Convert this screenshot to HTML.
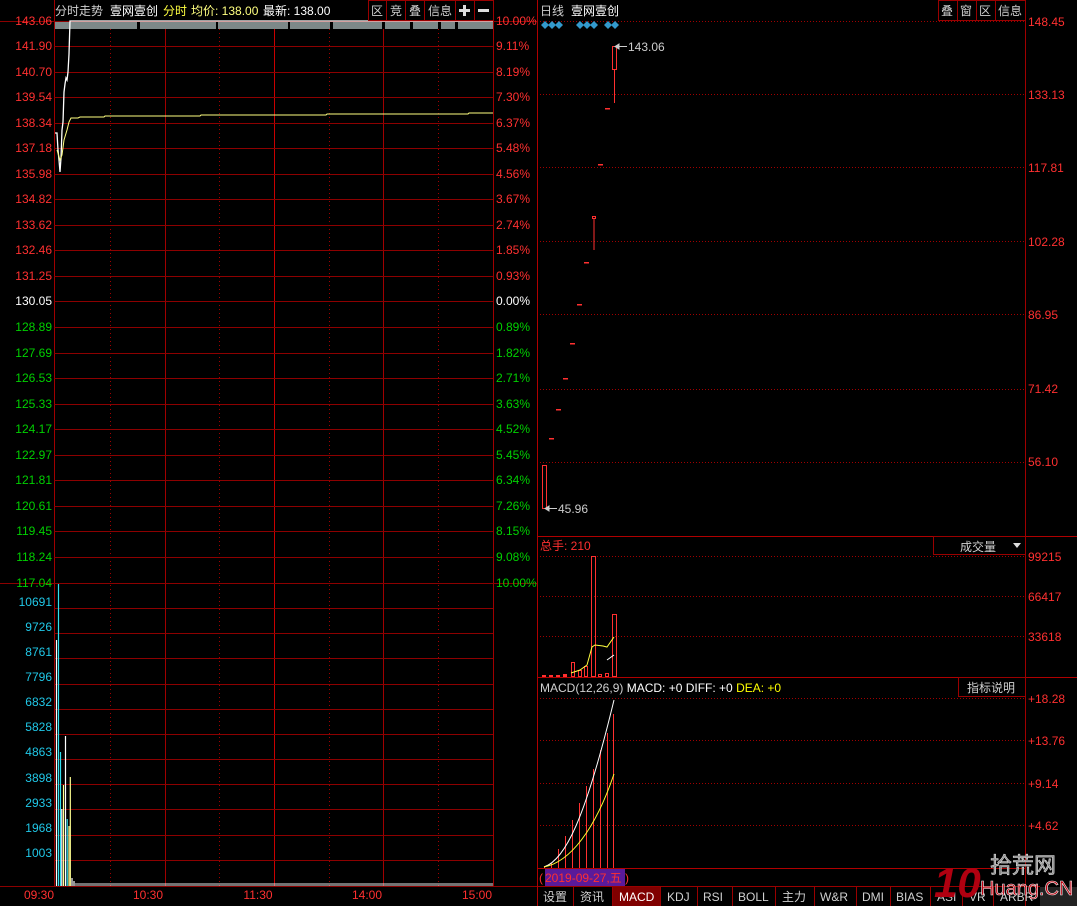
<!DOCTYPE html>
<html><head><meta charset="utf-8"><style>
html,body{margin:0;padding:0;background:#000;width:1077px;height:906px;overflow:hidden}
svg{display:block}
text{font-family:"Liberation Sans","Noto Sans CJK SC",sans-serif;font-size:12px}
.g line,.g rect{shape-rendering:crispEdges}
</style></head><body>
<svg width="1077" height="906" viewBox="0 0 1077 906" xmlns="http://www.w3.org/2000/svg">
<rect width="1077" height="906" fill="#000"/>
<g class="g">
<g stroke="#a00000" stroke-width="1">
<line x1="54.5" y1="0" x2="54.5" y2="886"/>
<line x1="493.5" y1="0" x2="493.5" y2="886"/>
<line x1="165.5" y1="21" x2="165.5" y2="886"/>
<line x1="383.5" y1="21" x2="383.5" y2="886"/>
</g>
<line x1="274.5" y1="21" x2="274.5" y2="886" stroke="#c80000" stroke-width="1"/>
<g stroke="#a00000" stroke-dasharray="1,3">
<line x1="110.5" y1="21" x2="110.5" y2="886"/>
<line x1="219.5" y1="21" x2="219.5" y2="886"/>
<line x1="329.5" y1="21" x2="329.5" y2="886"/>
<line x1="438.5" y1="21" x2="438.5" y2="886"/>
</g>
<g stroke="#8c0000">
<line x1="0" y1="21.5" x2="537" y2="21.5"/>
<line x1="54" y1="46.5" x2="493" y2="46.5"/><line x1="54" y1="72.5" x2="493" y2="72.5"/><line x1="54" y1="97.5" x2="493" y2="97.5"/><line x1="54" y1="123.5" x2="493" y2="123.5"/><line x1="54" y1="148.5" x2="493" y2="148.5"/><line x1="54" y1="174.5" x2="493" y2="174.5"/><line x1="54" y1="199.5" x2="493" y2="199.5"/><line x1="54" y1="225.5" x2="493" y2="225.5"/><line x1="54" y1="250.5" x2="493" y2="250.5"/><line x1="54" y1="276.5" x2="493" y2="276.5"/>
<line x1="54" y1="301.5" x2="493" y2="301.5"/>
<line x1="54" y1="327.5" x2="493" y2="327.5"/><line x1="54" y1="353.5" x2="493" y2="353.5"/><line x1="54" y1="378.5" x2="493" y2="378.5"/><line x1="54" y1="404.5" x2="493" y2="404.5"/><line x1="54" y1="429.5" x2="493" y2="429.5"/><line x1="54" y1="455.5" x2="493" y2="455.5"/><line x1="54" y1="480.5" x2="493" y2="480.5"/><line x1="54" y1="506.5" x2="493" y2="506.5"/><line x1="54" y1="531.5" x2="493" y2="531.5"/><line x1="54" y1="557.5" x2="493" y2="557.5"/>
<line x1="0" y1="583.5" x2="537" y2="583.5"/>
<line x1="54" y1="608.5" x2="493" y2="608.5"/><line x1="54" y1="633.5" x2="493" y2="633.5"/><line x1="54" y1="658.5" x2="493" y2="658.5"/><line x1="54" y1="684.5" x2="493" y2="684.5"/><line x1="54" y1="709.5" x2="493" y2="709.5"/><line x1="54" y1="734.5" x2="493" y2="734.5"/><line x1="54" y1="759.5" x2="493" y2="759.5"/><line x1="54" y1="784.5" x2="493" y2="784.5"/><line x1="54" y1="809.5" x2="493" y2="809.5"/><line x1="54" y1="835.5" x2="493" y2="835.5"/><line x1="54" y1="860.5" x2="493" y2="860.5"/>
<line x1="0" y1="886.5" x2="537" y2="886.5"/>
</g>
<line x1="537.5" y1="0" x2="537.5" y2="906" stroke="#b00000"/>
</g>
<!-- grey diamond band -->
<rect x="55" y="22" width="438" height="7" fill="#7d8888"/>
<g fill="#000"><rect x="137" y="22" width="3" height="7"/><rect x="216" y="22" width="2" height="7"/><rect x="288" y="22" width="2" height="7"/><rect x="330" y="22" width="3" height="7"/><rect x="382" y="22" width="3" height="7"/><rect x="410" y="22" width="3" height="7"/><rect x="438" y="22" width="3" height="7"/><rect x="455" y="22" width="3" height="7"/></g>
<!-- price lines -->
<polyline fill="none" stroke="#fff" stroke-width="1.3" points="55,133 57,133 58,150 59,160 60,172 61,158 62,130 63,122 64,92 65,84 66,78 67,80 68,72 69,54 70,21 493,21"/>
<polyline fill="none" stroke="#ffff80" stroke-width="1" points="57,150 60,160 62,155 64,140 67,130 69,122 71,118 78,118 80,117 104,117 105,116 200,116 201,115 326,115 327,114 468,114 469,113 493,113"/>
<!-- left labels -->
<g text-anchor="end" fill="#ff3030">
<text x="52" y="25">143.06</text><text x="52" y="50">141.90</text><text x="52" y="76">140.70</text><text x="52" y="101">139.54</text><text x="52" y="127">138.34</text><text x="52" y="152">137.18</text><text x="52" y="178">135.98</text><text x="52" y="203">134.82</text><text x="52" y="229">133.62</text><text x="52" y="254">132.46</text><text x="52" y="280">131.25</text>
</g>
<text x="52" y="305" text-anchor="end" fill="#fff">130.05</text>
<g text-anchor="end" fill="#00d000">
<text x="52" y="331">128.89</text><text x="52" y="357">127.69</text><text x="52" y="382">126.53</text><text x="52" y="408">125.33</text><text x="52" y="433">124.17</text><text x="52" y="459">122.97</text><text x="52" y="484">121.81</text><text x="52" y="510">120.61</text><text x="52" y="535">119.45</text><text x="52" y="561">118.24</text><text x="52" y="587">117.04</text>
</g>
<g fill="#ff3030">
<text x="496" y="25">10.00%</text><text x="496" y="50">9.11%</text><text x="496" y="76">8.19%</text><text x="496" y="101">7.30%</text><text x="496" y="127">6.37%</text><text x="496" y="152">5.48%</text><text x="496" y="178">4.56%</text><text x="496" y="203">3.67%</text><text x="496" y="229">2.74%</text><text x="496" y="254">1.85%</text><text x="496" y="280">0.93%</text>
</g>
<text x="496" y="305" fill="#fff">0.00%</text>
<g fill="#00d000">
<text x="496" y="331">0.89%</text><text x="496" y="357">1.82%</text><text x="496" y="382">2.71%</text><text x="496" y="408">3.63%</text><text x="496" y="433">4.52%</text><text x="496" y="459">5.45%</text><text x="496" y="484">6.34%</text><text x="496" y="510">7.26%</text><text x="496" y="535">8.15%</text><text x="496" y="561">9.08%</text><text x="496" y="587">10.00%</text>
</g>
<g text-anchor="end" fill="#20c8e8">
<text x="52" y="606">10691</text><text x="52" y="631">9726</text><text x="52" y="656">8761</text><text x="52" y="681">7796</text><text x="52" y="706">6832</text><text x="52" y="731">5828</text><text x="52" y="756">4863</text><text x="52" y="782">3898</text><text x="52" y="807">2933</text><text x="52" y="832">1968</text><text x="52" y="857">1003</text>
</g>
<!-- volume bars -->
<g stroke-width="1.2">
<line x1="56.5" y1="640" x2="56.5" y2="886" stroke="#fff"/>
<line x1="58.5" y1="584" x2="58.5" y2="886" stroke="#30e0f0"/>
<line x1="60.5" y1="752" x2="60.5" y2="886" stroke="#30e0f0"/>
<line x1="61.8" y1="809" x2="61.8" y2="886" stroke="#fff"/>
<line x1="63.5" y1="785" x2="63.5" y2="886" stroke="#ffff90"/>
<line x1="65.5" y1="736" x2="65.5" y2="886" stroke="#fff"/>
<line x1="67.2" y1="819" x2="67.2" y2="886" stroke="#30e0f0"/>
<line x1="69" y1="826" x2="69" y2="886" stroke="#ffff90"/>
<line x1="70.3" y1="777" x2="70.3" y2="886" stroke="#ffff90"/>
<line x1="72" y1="878" x2="72" y2="886" stroke="#fff"/>
<line x1="74" y1="881" x2="74" y2="886" stroke="#fff"/>
</g>
<rect x="75" y="883" width="418" height="3" fill="#fff" opacity="0.45"/>
<!-- time labels -->
<g fill="#ff3030" text-anchor="middle">
<text x="39" y="899">09:30</text><text x="148" y="899">10:30</text><text x="258" y="899">11:30</text><text x="367" y="899">14:00</text><text x="477" y="899">15:00</text>
</g>
<!-- left header -->
<text x="55" y="15" fill="#d0d0d0">分时走势</text>
<text x="110" y="15" fill="#fff">壹网壹创</text>
<text x="163" y="15" fill="#ffff40">分时</text>
<text x="191" y="15" fill="#ffff80">均价: 138.00</text>
<text x="263" y="15" fill="#fff">最新: 138.00</text>
<g fill="none" stroke="#9a0000">
<rect x="368.5" y="0.5" width="18" height="20"/><rect x="386.5" y="0.5" width="19" height="20"/><rect x="405.5" y="0.5" width="19" height="20"/><rect x="424.5" y="0.5" width="31" height="20"/><rect x="455.5" y="0.5" width="19" height="20"/><rect x="474.5" y="0.5" width="19" height="20"/>
</g>
<g fill="#d0d0d0"><text x="371" y="15">区</text><text x="390" y="15">竞</text><text x="409" y="15">叠</text><text x="428" y="15">信息</text></g>
<rect x="459" y="9" width="11" height="3" fill="#ddd"/><rect x="463" y="5" width="3" height="11" fill="#ddd"/>
<rect x="478" y="9" width="11" height="3" fill="#ddd"/>

<!-- RIGHT PANEL -->
<g class="g">
<line x1="1025.5" y1="0" x2="1025.5" y2="906" stroke="#a00000"/>
<g stroke="#b00000"><line x1="538" y1="536.5" x2="1077" y2="536.5"/><line x1="538" y1="677.5" x2="1077" y2="677.5"/><line x1="538" y1="868.5" x2="1025" y2="868.5"/></g>
<g stroke="#a00000" stroke-dasharray="1,2">
<line x1="540" y1="21.5" x2="1025" y2="21.5"/><line x1="540" y1="94.5" x2="1025" y2="94.5"/><line x1="540" y1="167.5" x2="1025" y2="167.5"/><line x1="540" y1="241.5" x2="1025" y2="241.5"/><line x1="540" y1="314.5" x2="1025" y2="314.5"/><line x1="540" y1="389.5" x2="1025" y2="389.5"/><line x1="540" y1="462.5" x2="1025" y2="462.5"/>
<line x1="540" y1="556.5" x2="1025" y2="556.5"/><line x1="540" y1="596.5" x2="1025" y2="596.5"/><line x1="540" y1="636.5" x2="1025" y2="636.5"/>
<line x1="540" y1="698.5" x2="1025" y2="698.5"/><line x1="540" y1="740.5" x2="1025" y2="740.5"/><line x1="540" y1="783.5" x2="1025" y2="783.5"/><line x1="540" y1="825.5" x2="1025" y2="825.5"/>
</g>
</g>
<g fill="#ff3030">
<text x="1028" y="26">148.45</text><text x="1028" y="99">133.13</text><text x="1028" y="172">117.81</text><text x="1028" y="246">102.28</text><text x="1028" y="319">86.95</text><text x="1028" y="393">71.42</text><text x="1028" y="466">56.10</text>
<text x="1028" y="561">99215</text><text x="1028" y="601">66417</text><text x="1028" y="641">33618</text>
<text x="1028" y="703">+18.28</text><text x="1028" y="745">+13.76</text><text x="1028" y="788">+9.14</text><text x="1028" y="830">+4.62</text>
</g>
<text x="540" y="15" fill="#d0d0d0">日线</text>
<text x="571" y="15" fill="#fff">壹网壹创</text>
<g fill="#3399cc">
<path d="M541 25l4-4 4 4-4 4zM548 25l4-4 4 4-4 4zM555 25l4-4 4 4-4 4z"/>
<path d="M576 25l4-4 4 4-4 4zM583 25l4-4 4 4-4 4zM590 25l4-4 4 4-4 4z"/>
<path d="M604 25l4-4 4 4-4 4zM611 25l4-4 4 4-4 4z"/>
</g>
<g fill="none" stroke="#9a0000">
<rect x="938.5" y="0.5" width="19" height="20"/><rect x="957.5" y="0.5" width="19" height="20"/><rect x="976.5" y="0.5" width="19" height="20"/><rect x="995.5" y="0.5" width="30" height="20"/>
</g>
<g fill="#d0d0d0"><text x="941" y="15">叠</text><text x="960" y="15">窗</text><text x="979" y="15">区</text><text x="998" y="15">信息</text></g>
<!-- candles -->
<g stroke="#ff3030" fill="none">
<rect x="542.5" y="465.5" width="4" height="43"/>
<rect x="592.5" y="216.5" width="3" height="2"/><line x1="594" y1="219" x2="594" y2="250"/>
<rect x="612.5" y="46.5" width="4" height="23"/><line x1="614.5" y1="70" x2="614.5" y2="103"/>
</g>
<g fill="#ff3030">
<rect x="549" y="438" width="5" height="1.5"/><rect x="556" y="409" width="5" height="1.5"/><rect x="563" y="378" width="5" height="1.5"/><rect x="570" y="343" width="5" height="1.5"/><rect x="577" y="304" width="5" height="1.5"/><rect x="584" y="262" width="5" height="1.5"/><rect x="598" y="164" width="5" height="1.5"/><rect x="605" y="108" width="5" height="1.5"/>
</g>
<g stroke="#ccc" fill="#ccc"><line x1="546" y1="508.5" x2="557" y2="508.5"/><path d="M545 508.5l4-2.5v5z"/><line x1="616" y1="46.5" x2="627" y2="46.5"/><path d="M615 46.5l4-2.5v5z"/></g>
<text x="558" y="513" fill="#ccc">45.96</text>
<text x="628" y="51" fill="#ccc">143.06</text>
<!-- volume panel -->
<text x="540" y="550" fill="#ff3030">总手: 210</text>
<rect x="933.5" y="536.5" width="92" height="18" fill="none" stroke="#9a0000"/>
<text x="960" y="551" fill="#d0d0d0">成交量</text>
<path d="M1013 543h8l-4 5z" fill="#ddd"/>
<g fill="none" stroke="#ff3030">
<rect x="571.5" y="662.5" width="3" height="14"/><rect x="578.5" y="670.5" width="3" height="6"/><rect x="584.5" y="666.5" width="3" height="10"/><rect x="591.5" y="556.5" width="4" height="120"/><rect x="598.5" y="674.5" width="3" height="2"/><rect x="605.5" y="673.5" width="3" height="3"/><rect x="612.5" y="614.5" width="4" height="62"/>
</g>
<g fill="#ff3030"><rect x="542" y="675" width="4" height="2"/><rect x="549" y="675" width="4" height="2"/><rect x="556" y="675" width="4" height="2"/><rect x="563" y="674" width="4" height="3"/></g>
<polyline fill="none" stroke="#ffff40" points="571,673 580,670 587,665 592,647 595,645 603,646 607,647 614,637"/>
<polyline fill="none" stroke="#fff" points="607,660 614,655"/>
<!-- MACD panel -->
<text x="540" y="692" fill="#d0d0d0">MACD(12,26,9) <tspan fill="#fff">MACD: +0 DIFF: +0 </tspan><tspan fill="#ffff00">DEA: +0</tspan></text>
<rect x="958.5" y="677.5" width="67" height="19" fill="none" stroke="#9a0000"/>
<text x="967" y="692" fill="#d0d0d0">指标说明</text>
<g stroke="#ff3030">
<line x1="544.5" y1="866" x2="544.5" y2="868"/><line x1="551.5" y1="863" x2="551.5" y2="868"/><line x1="558.5" y1="849" x2="558.5" y2="868"/><line x1="565.5" y1="836" x2="565.5" y2="868"/><line x1="572.5" y1="820" x2="572.5" y2="868"/><line x1="579.5" y1="803" x2="579.5" y2="868"/><line x1="586.5" y1="786" x2="586.5" y2="868"/><line x1="593.5" y1="769" x2="593.5" y2="868"/><line x1="600.5" y1="750" x2="600.5" y2="868"/><line x1="607.5" y1="733" x2="607.5" y2="868"/><line x1="613.5" y1="714" x2="613.5" y2="868"/>
</g>
<path d="M544 867C565 860 585 820 614 700" fill="none" stroke="#fff"/>
<path d="M544 867C570 862 595 830 614 774" fill="none" stroke="#ffff30"/>
<!-- date box -->
<rect x="545" y="869" width="80" height="17" fill="#5a1a9a"/>
<text x="539" y="882" fill="#ff3030">(</text>
<text x="545" y="882" fill="#ff3030">2019-09-27,五</text>
<text x="625" y="882" fill="#ff3030">)</text>
<!-- tabs -->
<line x1="538" y1="886.5" x2="1040" y2="886.5" stroke="#9a0000"/>
<rect x="612" y="887" width="48" height="19" fill="#800000"/>
<g stroke="#9a0000"><line x1="573.5" y1="887" x2="573.5" y2="906"/><line x1="612.5" y1="887" x2="612.5" y2="906"/><line x1="660.5" y1="887" x2="660.5" y2="906"/><line x1="697.5" y1="887" x2="697.5" y2="906"/><line x1="732.5" y1="887" x2="732.5" y2="906"/><line x1="775.5" y1="887" x2="775.5" y2="906"/><line x1="814.5" y1="887" x2="814.5" y2="906"/><line x1="856.5" y1="887" x2="856.5" y2="906"/><line x1="890.5" y1="887" x2="890.5" y2="906"/><line x1="930.5" y1="887" x2="930.5" y2="906"/><line x1="962.5" y1="887" x2="962.5" y2="906"/><line x1="993.5" y1="887" x2="993.5" y2="906"/></g>
<g fill="#d0d0d0">
<text x="543" y="901">设置</text><text x="580" y="901">资讯</text><text x="619" y="901" fill="#fff">MACD</text><text x="667" y="901">KDJ</text><text x="703" y="901">RSI</text><text x="738" y="901">BOLL</text><text x="782" y="901">主力</text><text x="820" y="901">W&amp;R</text><text x="862" y="901">DMI</text><text x="896" y="901">BIAS</text><text x="937" y="901">ASI</text><text x="969" y="901">VR</text><text x="1000" y="901">ARBR</text>
</g>
<rect x="1040" y="887" width="37" height="19" fill="#222"/>
<!-- watermark -->
<text x="934" y="897" fill="#b00010" style="font-size:42px;font-weight:bold;font-style:italic">10</text>
<text x="990" y="873" fill="#888" stroke="#ddd" stroke-width="0.6" style="font-size:22px">拾荒网</text>
<text x="980" y="895" fill="#c00010" stroke="#eee" stroke-width="0.6" style="font-size:20px">Huang.CN</text>
</svg>
</body></html>
